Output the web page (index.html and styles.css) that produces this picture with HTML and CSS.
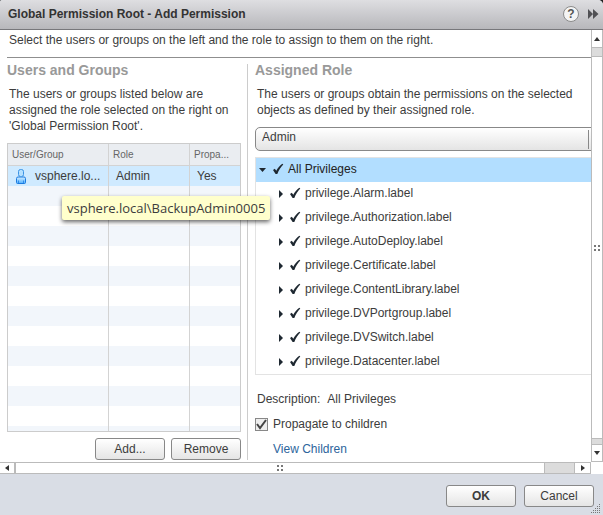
FILE: index.html
```html
<!DOCTYPE html>
<html lang="en">
<head>
<meta charset="utf-8">
<title>Global Permission Root - Add Permission</title>
<link rel="stylesheet" href="styles.css">
</head>
<body>
<svg class="defs" aria-hidden="true">
  <linearGradient id="body-fill" x1="0" y1="0" x2="0" y2="1"><stop offset="0" stop-color="#d4eeff"/><stop offset="1" stop-color="#4fb0ff"/></linearGradient>
  <symbol id="check" viewBox="0 0 12 12"><path d="M1 7 2.800 5.800l1.500 2C5.700 5.200 7.700 2.500 10.300.8l1 .7C8.900 4 6.700 7.400 5.300 11H3.600z"/></symbol>
  <symbol id="closed" viewBox="0 0 6 8"><path d="M1 0l4 4-4 4z"/></symbol>
  <symbol id="open" viewBox="0 0 8 5"><path d="M0 0h7L3.500 4z"/></symbol>
</svg>
<main class="dialog">
  <header class="titlebar">
    <h1>Global Permission Root - Add Permission</h1>
    <button class="help" type="button" aria-label="Help">?</button>
    <button class="expand" type="button" aria-label="Expand"><svg width="12" height="12" viewBox="0 0 12 12"><path d="M1 1l5 5-5 5zM6 1l5.500 5L6 11z"/></svg></button>
  </header>
  <div class="viewport">
    <div class="content">
      <p class="intro">Select the users or groups on the left and the role to assign to them on the right.</p>
      <div class="columns">
        <section class="users">
          <h2>Users and Groups</h2>
          <p class="lead">The users or groups listed below are assigned the role selected on the right on 'Global Permission Root'.</p>
          <div class="grid">
            <table>
              <colgroup><col class="c-user"><col class="c-role"><col class="c-prop"></colgroup>
              <thead><tr><th>User/Group</th><th>Role</th><th>Propa...</th></tr></thead>
              <tbody>
                <tr class="selected"><td><span class="user"><svg width="12" height="15" viewBox="0 0 12 15"><path d="M1.500 13.500v-4q0-1.500 1.500-1.500h6q1.500 0 1.500 1.500v4q0 1-1 1h-7q-1 0-1-1z" fill="url(#body-fill)" stroke="#1a7ae0"/><path d="M3.500 11.500v2.500M8.500 11.500v2.500" stroke="#2f8cea"/><rect x="3.500" y=".5" width="5" height="7" rx="2" fill="#b5e0ff" stroke="#3b93e4"/></svg>vsphere.lo...</span></td><td>Admin</td><td>Yes</td></tr>
                <tr><td></td><td></td><td></td></tr><tr><td></td><td></td><td></td></tr>
                <tr><td></td><td></td><td></td></tr><tr><td></td><td></td><td></td></tr>
                <tr><td></td><td></td><td></td></tr><tr><td></td><td></td><td></td></tr>
                <tr><td></td><td></td><td></td></tr><tr><td></td><td></td><td></td></tr>
                <tr><td></td><td></td><td></td></tr><tr><td></td><td></td><td></td></tr>
                <tr><td></td><td></td><td></td></tr><tr><td></td><td></td><td></td></tr>
                <tr><td></td><td></td><td></td></tr>
              </tbody>
            </table>
            <div class="tooltip" role="tooltip">vsphere.local\BackupAdmin0005</div>
          </div>
          <div class="actions"><button class="btn" type="button">Add...</button><button class="btn" type="button">Remove</button></div>
        </section>
        <section class="role">
          <h2>Assigned Role</h2>
          <p class="lead">The users or groups obtain the permissions on the selected objects as defined by their assigned role.</p>
          <select class="picker" aria-label="Assigned role"><option>Admin</option></select>
          <ul class="tree">
            <li class="root"><svg class="tw-open"><use href="#open"/></svg><svg class="tick"><use href="#check"/></svg>All Privileges</li>
            <li><svg class="tw"><use href="#closed"/></svg><svg class="tick"><use href="#check"/></svg>privilege.Alarm.label</li>
            <li><svg class="tw"><use href="#closed"/></svg><svg class="tick"><use href="#check"/></svg>privilege.Authorization.label</li>
            <li><svg class="tw"><use href="#closed"/></svg><svg class="tick"><use href="#check"/></svg>privilege.AutoDeploy.label</li>
            <li><svg class="tw"><use href="#closed"/></svg><svg class="tick"><use href="#check"/></svg>privilege.Certificate.label</li>
            <li><svg class="tw"><use href="#closed"/></svg><svg class="tick"><use href="#check"/></svg>privilege.ContentLibrary.label</li>
            <li><svg class="tw"><use href="#closed"/></svg><svg class="tick"><use href="#check"/></svg>privilege.DVPortgroup.label</li>
            <li><svg class="tw"><use href="#closed"/></svg><svg class="tick"><use href="#check"/></svg>privilege.DVSwitch.label</li>
            <li><svg class="tw"><use href="#closed"/></svg><svg class="tick"><use href="#check"/></svg>privilege.Datacenter.label</li>
          </ul>
          <p class="desc"><span>Description:</span><span>All Privileges</span></p>
          <label class="propagate"><input type="checkbox" checked>Propagate to children</label>
          <a class="view" href="#children">View Children</a>
        </section>
      </div>
    </div>
    <div class="vbar">
      <button type="button" aria-label="Scroll up"><svg width="6" height="4" viewBox="0 0 6 4"><path d="M3 0l3 4H0z"/></svg></button>
      <div class="track-top"></div>
      <div class="thumb"><svg width="6" height="6" viewBox="0 0 6 6"><path d="M0 0h2v2H0zM4 0h2v2H4zM0 4h2v2H0zM4 4h2v2H4z"/></svg></div>
      <div class="track-bottom"></div>
      <button type="button" aria-label="Scroll down"><svg width="6" height="4" viewBox="0 0 6 4"><path d="M0 0h6L3 4z"/></svg></button>
    </div>
    <div class="hbar">
      <button type="button" aria-label="Scroll left"><svg width="4" height="6" viewBox="0 0 4 6"><path d="M4 0v6L0 3z"/></svg></button>
      <div class="thumb"><svg width="6" height="6" viewBox="0 0 6 6"><path d="M0 0h2v2H0zM4 0h2v2H4zM0 4h2v2H0zM4 4h2v2H4z"/></svg></div>
      <div class="track"></div>
      <button type="button" aria-label="Scroll right"><svg width="4" height="6" viewBox="0 0 4 6"><path d="M0 0v6l4-3z"/></svg></button>
    </div>
  </div>
  <footer class="footer">
    <button class="btn ok" type="button">OK</button><button class="btn" type="button">Cancel</button>
    <svg class="resize" width="10" height="10" viewBox="0 0 10 10"><path d="M8 0h1v1H8zM6 2h1v1H6zM8 2h1v1H8zM4 4h1v1H4zM6 4h1v1H6zM8 4h1v1H8zM2 6h1v1H2zM4 6h1v1H4zM6 6h1v1H6zM8 6h1v1H8zM0 8h1v1H0zM2 8h1v1H2zM4 8h1v1H4zM6 8h1v1H6zM8 8h1v1H8z"/></svg>
  </footer>
</main>
</body>
</html>
```
FILE: styles.css
```css
* { box-sizing: border-box; }
body {
  margin: 0;
  background: #222;
  color: #3c3c3c;
  font: 12px/16px "Liberation Sans", Arial, sans-serif;
}
h1, h2, p, ul { margin: 0; padding: 0; }
button, select, input { font: inherit; color: inherit; margin: 0; }
button { padding: 0; }
svg { flex: none; fill: #333; }
.defs { position: absolute; width: 0; height: 0; }

.dialog {
  display: flex;
  flex-direction: column;
  min-height: 100vh;
  overflow: hidden;
  border-radius: 2px 5px 0 0;
  background: #d9dde5;
}
.titlebar {
  display: flex;
  align-items: center;
  gap: 8px;
  height: 30px;
  padding: 0 4px 2px 8px;
  border-bottom: 1px solid #77777b;
  background: linear-gradient(#dedee1, #b7b7bb);
}
.titlebar h1 { flex: 1; font-size: 12px; color: #333; }
.help {
  width: 16px;
  height: 16px;
  border: 1px solid #8b8b8b;
  border-radius: 50%;
  background: #f4f4f4;
  font-weight: bold;
  line-height: 14px;
  color: #555;
}
.expand { display: flex; border: 0; background: none; }
.expand svg { fill: #505054; }

.viewport {
  flex: 1;
  display: grid;
  grid-template: 1fr 12px / minmax(0, 1fr) 12px;
  background: #fff;
}
.content { padding: 2px 0 1px 7px; overflow: hidden; }
.intro {
  padding: 0 2px 9px;
  border-bottom: 1px solid #8f8f8f;
}
.columns {
  display: grid;
  grid-template-columns: 240fr 344fr;
  padding-top: 6px;
}
.users { padding-right: 6px; }
.role { padding-left: 7px; border-left: 1px solid #ccc; min-width: 0; }
h2 { font-size: 14px; line-height: 12px; color: #999; }
.lead { padding: 10px 2px 9px; }

.grid { position: relative; height: 289px; border: 1px solid #ccc; }
table {
  display: block;
  height: 287px;
  overflow: hidden;
  border-spacing: 0;
}
.c-user { width: 101px; }
.c-role { width: 81px; }
.c-prop { width: 50px; }
th, td { border-right: 1px solid #d3d3d3; white-space: nowrap; text-align: left; }
th:last-child, td:last-child { border-right: 0; }
th {
  height: 22px;
  padding: 0 4px;
  border-bottom: 1px solid #d3d3d3;
  background: #eaedf1;
  color: #666;
  font-size: 10px;
  font-weight: normal;
}
td { height: 20px; padding: 0 7px; }
tr:nth-child(even) td { background: #f2f6fb; }
.selected td { background: #cfeaff; }
.user { display: flex; align-items: center; gap: 8px; }
.tooltip {
  position: absolute;
  left: 54px;
  top: 52px;
  padding: 4px 5px;
  border-radius: 2px;
  background: #ffffcc;
  box-shadow: 0 2px 4px rgba(0, 0, 0, .6);
  font: 13px/16px "Open Sans", sans-serif;
  white-space: nowrap;
}
.actions { display: flex; justify-content: flex-end; gap: 6px; padding-top: 6px; }
.btn {
  width: 70px;
  height: 22px;
  border: 1px solid #888;
  border-radius: 3px;
  background: linear-gradient(#fff, #e5e5e5);
}
.ok { font-weight: bold; }

.picker {
  display: block;
  width: calc(100% + 12px);
  height: 24px;
  padding: 0 6px 4px;
  border: 1px solid #888;
  border-radius: 5px;
  appearance: none;
  background: linear-gradient(#888, #888) right 13px top 2px / 1px 19px no-repeat, linear-gradient(#fff, #e4e4e4);
}
.tree {
  margin-top: 6px;
  border: 1px solid #e3e3e3;
  border-right: 0;
  list-style: none;
}
.tree li { display: flex; align-items: center; height: 24px; padding: 0 0 2px 22px; }
.tree .root { padding-left: 3px; background: #b2deff; color: #222; }
.tree svg { fill: #1e2831; }
.tw { width: 6px; height: 8px; margin: 2px 5px 0 0; }
.tw-open { width: 8px; height: 5px; margin: 2px 5px 0 0; }
.tick { width: 12px; height: 12px; margin-right: 4px; }
.desc { display: flex; gap: 7px; padding: 16px 2px 0; }
.propagate { display: flex; align-items: center; gap: 5px; margin-top: 9px; }
.propagate input {
  width: 13px;
  height: 13px;
  appearance: none;
  border: 1px solid #888;
  background: #eee url("data:image/svg+xml,%3Csvg xmlns='http://www.w3.org/2000/svg' viewBox='0 0 11 11'%3E%3Cpath d='M1 5l3 4L10 1' fill='none' stroke='%23444' stroke-width='2'/%3E%3C/svg%3E");
}
.view { display: inline-block; margin: 9px 0 0 18px; color: #2d659c; text-decoration: none; }

.vbar, .hbar { display: flex; }
.vbar { flex-direction: column; border: 1px solid #bbb; border-width: 0 1px; }
.vbar button, .hbar button {
  display: flex;
  align-items: center;
  justify-content: center;
  border: 0 solid #bbb;
  background: #fff;
}
.vbar button { height: 17px; }
.vbar button:first-child { height: 18px; border-bottom-width: 1px; }
.vbar button:last-child { height: 18px; border-width: 1px 0; }
.track-top, .track-bottom, .track { background: #dcdcdc; }
.track-top { height: 8px; }
.track-bottom { height: 5px; }
.thumb { display: flex; align-items: center; justify-content: center; flex: 1; background: #fff; }
.thumb svg { fill: #777; }
.vbar .thumb { border: 1px solid #bbb; border-width: 1px 0; }
.hbar { border: 1px solid #bbb; border-width: 1px 0; }
.hbar button { width: 17px; }
.hbar button:first-child { width: 16px; border-right: 2px solid #bbb; }
.hbar button:last-child { border-width: 0 1px; }
.hbar .thumb { border-right: 1px solid #bbb; }
.track { width: 29px; }

.footer {
  position: relative;
  display: flex;
  justify-content: flex-end;
  gap: 8px;
  padding: 11px 9px 8px;
}
.resize { position: absolute; right: 2px; bottom: 1px; fill: #777; }
```
